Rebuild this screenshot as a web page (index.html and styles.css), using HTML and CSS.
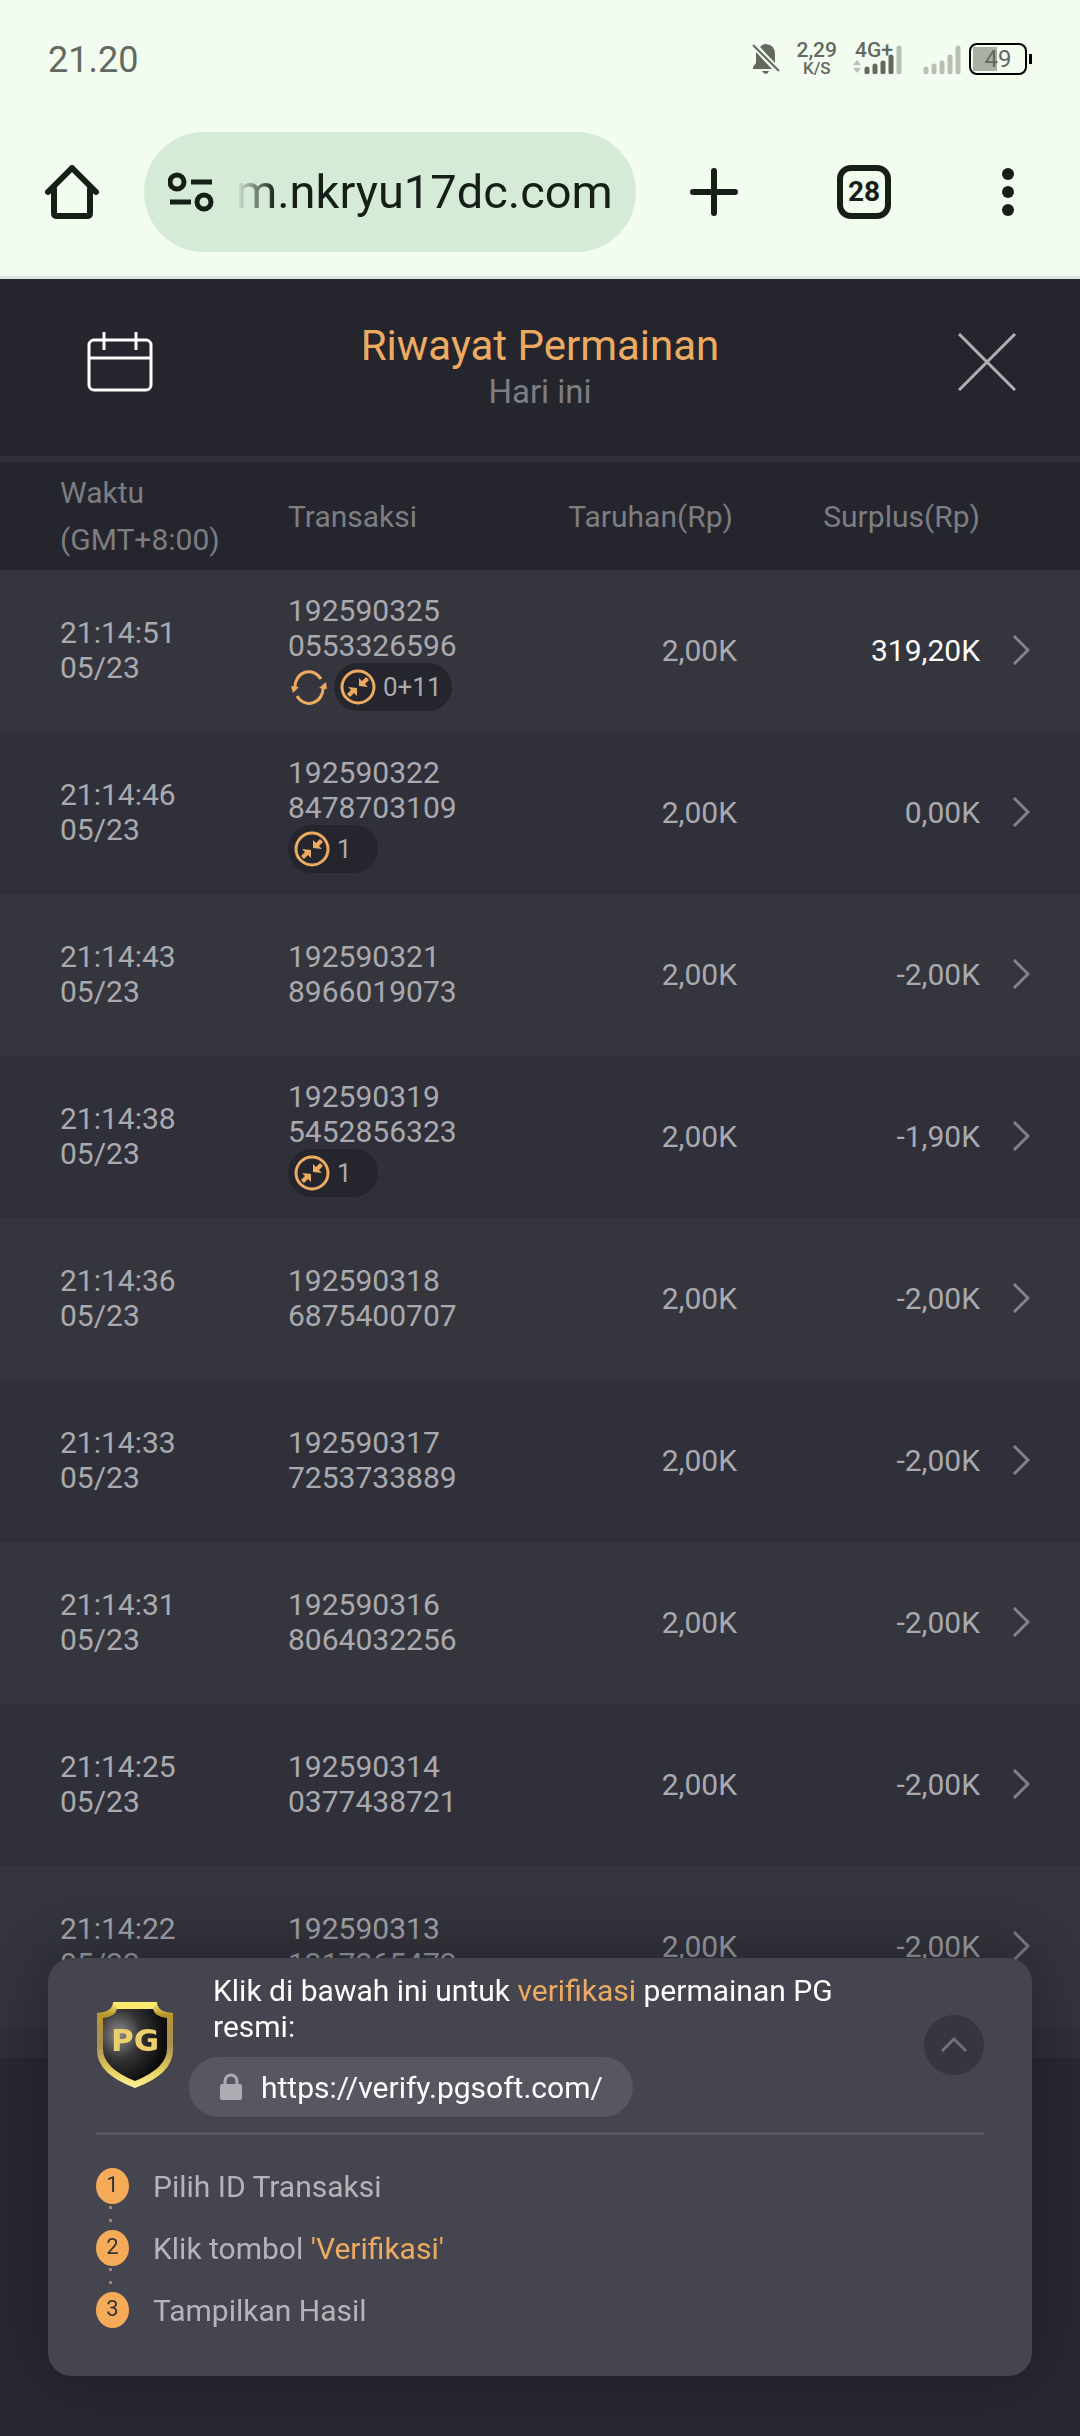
FILE: index.html
```html
<!DOCTYPE html>
<html lang="id">
<head>
  <meta charset="utf-8">
  <meta name="viewport" content="width=device-width, initial-scale=1">
  <title>Riwayat Permainan</title>
  <link rel="stylesheet" href="styles.css">
</head>
<body>
  <svg class="defs" width="0" height="0" aria-hidden="true">
    <symbol id="chevron" viewBox="0 0 18 30">
      <path d="M2 1l14 14L2 29" fill="none" stroke="currentColor" stroke-width="3"/>
    </symbol>
    <symbol id="collapse" viewBox="0 0 36 36">
      <circle cx="18" cy="18" r="16" fill="none" stroke="currentColor" stroke-width="3"/>
      <path d="M19 17v-8l3 3 4-4 3 3-4 4 3 3z" fill="currentColor"/>
      <path d="M17 19v8l-3-3-4 4-3-3 4-4-3-3z" fill="currentColor"/>
    </symbol>
    <symbol id="respin" viewBox="0 0 36 36">
      <path d="M4 18a14 15 0 0 1 26-8M32 18a14 15 0 0 1-26 9" fill="none" stroke="currentColor" stroke-width="3"/>
      <path d="M0 17l8 1-6 6zM36 20l-8-1 7-6z" fill="currentColor"/>
    </symbol>
  </svg>

  <div class="status-bar">
    <span class="clock">21.20</span>
    <div class="status-icons">
      <svg class="bell" width="28" height="32" viewBox="0 0 28 32">
        <path d="M8 4q3-3 6-3 9 1 9 10v9zM4 9L20 26H1v-2l3-4zM10 28h7q-1 3-3 3t-4-3z" fill="currentColor"/>
        <path d="M1 2l26 26" stroke="currentColor" stroke-width="2"/>
      </svg>
      <div class="speed"><span>2,29</span><small>K/S</small></div>
      <div class="network">
        <span>4G+</span>
        <svg width="50" height="30" viewBox="0 0 50 30">
          <path d="M0 21l4-5 4 5zM0 24l4 5 4-5z" fill="#b8c0b4"/>
          <path d="M14 28v-3M22 28v-6M30 28v-9M38 28V13" stroke="currentColor" stroke-width="5" stroke-linecap="round"/>
          <path d="M46 28V4" stroke="#b8c0b4" stroke-width="5" stroke-linecap="round"/>
        </svg>
      </div>
      <svg class="signal" width="38" height="30" viewBox="0 0 38 30">
        <path d="M3 28v-3M11 28v-6M19 28v-9M27 28V13M35 28V4" stroke="#b8c0b4" stroke-width="5" stroke-linecap="round"/>
      </svg>
      <div class="battery"><span>49</span></div>
    </div>
  </div>

  <div class="browser-bar">
    <button class="icon-button" aria-label="Beranda">
      <svg width="54" height="54" viewBox="0 0 54 54" fill="none" stroke="currentColor" stroke-width="6" stroke-linecap="round" stroke-linejoin="round">
        <path d="M3 27L27 3l24 24M9 24v24q0 3 3 3h30q3 0 3-3V24"/>
      </svg>
    </button>
    <div class="address">
      <svg width="46" height="40" viewBox="0 0 46 40" fill="none" stroke="currentColor" stroke-width="5">
        <circle cx="9" cy="10" r="7"/>
        <path d="M23 10h21M2 30h21"/>
        <circle cx="36" cy="30" r="7"/>
      </svg>
      <span class="address-text">m.nkryu17dc.com</span>
    </div>
    <div class="browser-actions">
      <button class="icon-button" aria-label="Tab baru">
        <svg width="48" height="48" viewBox="0 0 48 48" stroke="currentColor" stroke-width="6" stroke-linecap="round">
          <path d="M3 24h42M24 3v42"/>
        </svg>
      </button>
      <button class="tabs-button">28</button>
      <button class="icon-button" aria-label="Menu">
        <svg width="36" height="48" viewBox="0 0 36 48" fill="currentColor">
          <circle cx="18" cy="6" r="6"/>
          <circle cx="18" cy="24" r="6"/>
          <circle cx="18" cy="42" r="6"/>
        </svg>
      </button>
    </div>
  </div>

  <header class="header">
    <button class="calendar-button" aria-label="Kalender">
      <svg width="66" height="60" viewBox="0 0 66 60" fill="none" stroke="#fff" stroke-width="3">
        <rect x="2" y="8" width="62" height="50" rx="5"/>
        <path d="M2 26h62M17 0v18M49 0v18"/>
      </svg>
    </button>
    <div class="header-title">
      <h1>Riwayat Permainan</h1>
      <p>Hari ini</p>
    </div>
    <button class="close-button" aria-label="Tutup">
      <svg width="58" height="58" viewBox="0 0 58 58" stroke="#b0b0b4" stroke-width="3">
        <path d="M1 1l56 56M57 1L1 57"/>
      </svg>
    </button>
  </header>

  <main class="history">
    <table class="history-table">
      <thead>
        <tr>
          <th class="col-time">Waktu<br>(GMT+8:00)</th>
          <th>Transaksi</th>
          <th class="col-bet">Taruhan(Rp)</th>
          <th class="col-profit">Surplus(Rp)</th>
          <th class="col-more"></th>
        </tr>
      </thead>
      <tbody>
        <tr>
          <td>21:14:51<br>05/23</td>
          <td>
            192590325<br>0553326596
            <div class="badges">
              <svg class="respin" width="36" height="36"><use href="#respin"/></svg>
              <span class="badge"><svg width="36" height="36"><use href="#collapse"/></svg>0+11</span>
            </div>
          </td>
          <td>2,00K</td>
          <td class="win">319,20K</td>
          <td><button class="more" aria-label="Detail"><svg width="18" height="30"><use href="#chevron"/></svg></button></td>
        </tr>
        <tr>
          <td>21:14:46<br>05/23</td>
          <td>
            192590322<br>8478703109
            <div class="badges">
              <span class="badge"><svg width="36" height="36"><use href="#collapse"/></svg>1</span>
            </div>
          </td>
          <td>2,00K</td>
          <td>0,00K</td>
          <td><button class="more" aria-label="Detail"><svg width="18" height="30"><use href="#chevron"/></svg></button></td>
        </tr>
        <tr>
          <td>21:14:43<br>05/23</td>
          <td>192590321<br>8966019073</td>
          <td>2,00K</td>
          <td>-2,00K</td>
          <td><button class="more" aria-label="Detail"><svg width="18" height="30"><use href="#chevron"/></svg></button></td>
        </tr>
        <tr>
          <td>21:14:38<br>05/23</td>
          <td>
            192590319<br>5452856323
            <div class="badges">
              <span class="badge"><svg width="36" height="36"><use href="#collapse"/></svg>1</span>
            </div>
          </td>
          <td>2,00K</td>
          <td>-1,90K</td>
          <td><button class="more" aria-label="Detail"><svg width="18" height="30"><use href="#chevron"/></svg></button></td>
        </tr>
        <tr>
          <td>21:14:36<br>05/23</td>
          <td>192590318<br>6875400707</td>
          <td>2,00K</td>
          <td>-2,00K</td>
          <td><button class="more" aria-label="Detail"><svg width="18" height="30"><use href="#chevron"/></svg></button></td>
        </tr>
        <tr>
          <td>21:14:33<br>05/23</td>
          <td>192590317<br>7253733889</td>
          <td>2,00K</td>
          <td>-2,00K</td>
          <td><button class="more" aria-label="Detail"><svg width="18" height="30"><use href="#chevron"/></svg></button></td>
        </tr>
        <tr>
          <td>21:14:31<br>05/23</td>
          <td>192590316<br>8064032256</td>
          <td>2,00K</td>
          <td>-2,00K</td>
          <td><button class="more" aria-label="Detail"><svg width="18" height="30"><use href="#chevron"/></svg></button></td>
        </tr>
        <tr>
          <td>21:14:25<br>05/23</td>
          <td>192590314<br>0377438721</td>
          <td>2,00K</td>
          <td>-2,00K</td>
          <td><button class="more" aria-label="Detail"><svg width="18" height="30"><use href="#chevron"/></svg></button></td>
        </tr>
        <tr>
          <td>21:14:22<br>05/23</td>
          <td>192590313<br>1317265473</td>
          <td>2,00K</td>
          <td>-2,00K</td>
          <td><button class="more" aria-label="Detail"><svg width="18" height="30"><use href="#chevron"/></svg></button></td>
        </tr>
      </tbody>
    </table>
  </main>

  <aside class="verify">
    <div class="verify-top">
      <svg class="shield" width="78" height="88" viewBox="0 0 78 88">
        <defs>
          <linearGradient id="gold" x1="0" y1="0" x2="0" y2="1">
            <stop offset="0" stop-color="#fff07a"/>
            <stop offset="0.15" stop-color="#b8952c"/>
            <stop offset="0.5" stop-color="#a98f52"/>
            <stop offset="0.8" stop-color="#e6cf5c"/>
            <stop offset="1" stop-color="#fff49a"/>
          </linearGradient>
          <radialGradient id="glass" cx="0.25" cy="0.35" r="0.7">
            <stop offset="0" stop-color="#8d8d8d"/>
            <stop offset="0.5" stop-color="#333"/>
            <stop offset="1" stop-color="#0e0e0e"/>
          </radialGradient>
        </defs>
        <path d="M17 1h44q0 10 16 11v37q0 24-38 38Q1 73 1 49V12q16-1 16-11z" fill="url(#gold)"/>
        <path d="M21 8h36q2 8 14 9v31q0 19-32 32Q7 67 7 48V17q12-1 14-9z" fill="url(#glass)"/>
        <path d="M17 1h44l-4 7H21z" fill="#fbe96c"/>
        <text class="shield-text" x="39" y="50" text-anchor="middle">PG</text>
      </svg>
      <div class="verify-info">
        <p>Klik di bawah ini untuk <span class="accent">verifikasi</span> permainan PG resmi:</p>
        <a class="verify-link" href="https://verify.pgsoft.com/">
          <svg width="24" height="28" viewBox="0 0 24 28">
            <path d="M6 12V8a6 6 0 0 1 12 0v4" fill="none" stroke="#adacb3" stroke-width="3"/>
            <rect x="1" y="11" width="22" height="16" rx="2" fill="#adacb3"/>
          </svg>
          https://verify.pgsoft.com/
        </a>
      </div>
      <button class="toggle" aria-label="Ciutkan">
        <svg width="26" height="16" viewBox="0 0 26 16">
          <path d="M1 14L13 2l12 12" fill="none" stroke="#71717a" stroke-width="3"/>
        </svg>
      </button>
    </div>
    <ol class="steps">
      <li><span class="step-number">1</span>Pilih ID Transaksi</li>
      <li><span class="step-number">2</span><span>Klik tombol <span class="accent">'Verifikasi'</span></span></li>
      <li><span class="step-number">3</span>Tampilkan Hasil</li>
    </ol>
  </aside>
</body>
</html>
```
FILE: styles.css
```css
* {
  margin: 0;
  padding: 0;
  box-sizing: border-box;
}

body {
  background: #292932;
  color: #aaaaae;
  font-family: Roboto, "Liberation Sans", sans-serif;
  font-size: 30px;
  line-height: 35px;
  min-height: 100vh;
}

button {
  background: none;
  border: none;
  color: inherit;
  font: inherit;
  cursor: pointer;
}

svg {
  display: block;
  flex-shrink: 0;
}

.defs {
  position: absolute;
}

.accent {
  color: #edab62;
}

/* Status bar */
.status-bar {
  background: #f2fdf0;
  color: #626960;
  height: 120px;
  padding: 0 48px;
  display: flex;
  align-items: center;
  justify-content: space-between;
}

.clock {
  font-size: 36px;
}

.status-icons {
  display: flex;
  align-items: center;
  padding-bottom: 3px;
  font-weight: 500;
}

.speed {
  display: flex;
  flex-direction: column;
  align-items: center;
  margin: 0 16px;
  font-size: 21px;
  line-height: 18px;
}

.speed small {
  font-size: 17px;
}

.network {
  position: relative;
}

.network span {
  position: absolute;
  top: -6px;
  left: 2px;
  font-size: 21px;
  line-height: 24px;
}

.signal {
  margin: 0 8px 0 20px;
}

.battery {
  position: relative;
  width: 58px;
  height: 32px;
  margin-right: 5px;
  border: 2px solid #000;
  border-radius: 8px;
  background: linear-gradient(#a9b1a7, #a9b1a7) 2px 2px / 24px 24px no-repeat;
  font-size: 24px;
  font-weight: 400;
  line-height: 28px;
  text-align: center;
}

.battery::after {
  content: "";
  position: absolute;
  top: 9px;
  right: -7px;
  width: 3px;
  height: 10px;
  background: #000;
}

/* Browser toolbar */
.browser-bar {
  background: #f2fdf0;
  border-bottom: 3px solid #dce6da;
  color: #161f17;
  height: 159px;
  padding: 12px 54px 24px 45px;
  display: flex;
  align-items: center;
}

.address {
  flex: 1;
  min-width: 0;
  height: 120px;
  margin-left: 45px;
  padding: 0 24px;
  border-radius: 60px;
  background: #d5ead7;
  display: flex;
  align-items: center;
  gap: 22px;
}

.address-text {
  flex: 1;
  min-width: 0;
  overflow: hidden;
  font-size: 47px;
  line-height: 60px;
  white-space: nowrap;
  -webkit-mask-image: linear-gradient(90deg, transparent, #000 40px);
  mask-image: linear-gradient(90deg, transparent, #000 40px);
}

.browser-actions {
  width: 390px;
  padding-left: 54px;
  display: flex;
  align-items: center;
  justify-content: space-between;
}

.tabs-button {
  width: 54px;
  height: 54px;
  border: 6px solid #161f17;
  border-radius: 14px;
  font-size: 28px;
  font-weight: 700;
  line-height: 42px;
}

/* Game history header */
.header {
  background: #25252e;
  border-bottom: 6px solid #30303c;
  height: 183px;
  padding-bottom: 12px;
  display: grid;
  grid-template-columns: 1fr auto 1fr;
  align-items: center;
}

.calendar-button {
  justify-self: start;
  margin-left: 87px;
}

.close-button {
  justify-self: end;
  margin-right: 64px;
}

.header-title {
  padding-top: 10px;
  text-align: center;
}

.header h1 {
  color: #edab62;
  font-size: 42px;
  font-weight: 400;
  line-height: 50px;
}

.header p {
  color: #7d7d82;
  font-size: 33px;
  line-height: 42px;
}

/* History table */
.history {
  background: #30303c;
  padding-bottom: 30px;
}

.history-table {
  width: 100%;
  border-collapse: collapse;
  table-layout: fixed;
}

.history-table th {
  background: #25252e;
  color: #7d7d82;
  height: 108px;
  font-weight: 400;
  line-height: 47px;
  text-align: left;
}

.history-table td {
  height: 162px;
  padding-bottom: 2px;
}

.history-table tbody tr {
  background: #35353e;
}

.history-table tbody tr:nth-child(even) {
  background: #30303b;
}

.history-table th:first-child,
.history-table td:first-child {
  padding-left: 60px;
}

.history-table th:nth-child(3),
.history-table th:nth-child(4),
.history-table td:nth-child(3),
.history-table td:nth-child(4) {
  text-align: right;
}

.col-time {
  width: 288px;
}

.history-table .col-bet {
  width: 240px;
  padding-right: 4px;
}

.col-profit {
  width: 243px;
}

.col-more {
  width: 100px;
}

.history-table .win {
  color: #fff;
}

.more {
  display: block;
  margin-left: 32px;
  color: #828288;
}

.badges {
  display: flex;
  align-items: center;
  gap: 7px;
  margin-bottom: -4px;
}

.respin {
  margin-left: 3px;
  color: #edab62;
}

.badge {
  height: 48px;
  min-width: 90px;
  padding: 0 10px 0 6px;
  border-radius: 24px;
  background: #25252d;
  display: flex;
  align-items: center;
  gap: 7px;
  font-size: 26px;
}

.badge svg {
  color: #edab62;
}

/* Verification card */
.verify {
  position: fixed;
  left: 48px;
  right: 48px;
  bottom: 60px;
  padding: 15px 48px 48px;
  border-radius: 24px;
  background: #45454f;
  box-shadow: 0 0 70px rgba(20, 20, 28, 0.6);
}

.verify-top {
  display: flex;
  align-items: center;
  padding-bottom: 15px;
  border-bottom: 3px solid #565661;
}

.shield-text {
  fill: #ecd06c;
  font-family: "DejaVu Sans", sans-serif;
  font-size: 31px;
  font-weight: 700;
}

.verify-info {
  flex: 1;
  margin-left: 15px;
  color: #fff;
}

.verify-info p {
  max-width: 680px;
  padding-left: 24px;
  line-height: 36px;
}

.verify-link {
  display: inline-flex;
  align-items: center;
  gap: 18px;
  height: 60px;
  margin-top: 12px;
  padding: 0 30px;
  border-radius: 30px;
  background: #575762;
  color: #fff;
  text-decoration: none;
  vertical-align: top;
}

.toggle {
  width: 60px;
  height: 60px;
  border-radius: 50%;
  background: #363640;
  display: flex;
  align-items: center;
  justify-content: center;
}

.steps {
  list-style: none;
  padding-top: 33px;
  display: flex;
  flex-direction: column;
  gap: 26px;
  color: #b4b4b9;
}

.steps li {
  position: relative;
  height: 36px;
  display: flex;
  align-items: center;
  gap: 24px;
}

.step-number {
  width: 33px;
  height: 36px;
  border-radius: 50%;
  background: #f5ab57;
  color: #33333b;
  font-size: 22px;
  line-height: 34px;
  text-align: center;
}

/* dotted line joining the numbers */
.steps li:not(:last-child)::after {
  content: "";
  position: absolute;
  top: 38px;
  left: 13px;
  width: 3px;
  height: 16px;
  background: linear-gradient(#a5846b 3px, transparent 3px 13px, #a5846b 13px);
}
```
